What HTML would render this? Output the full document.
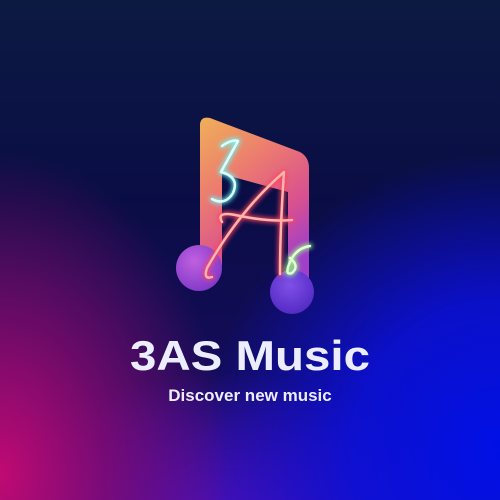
<!DOCTYPE html>
<html><head><meta charset="utf-8"><style>
html,body{margin:0;padding:0}
body{width:500px;height:500px;overflow:hidden;position:relative;font-family:"Liberation Sans",sans-serif;
background:
radial-gradient(ellipse 270px 380px at 0% 95%, #c00a72 0%, rgba(140,10,110,0.75) 40%, rgba(80,10,100,0) 85%),
radial-gradient(ellipse 330px 330px at 100% 90%, #0010e6 0%, rgba(10,16,220,0.85) 45%, rgba(20,16,160,0) 90%),
radial-gradient(ellipse 280px 180px at 45% 105%, #4a10b8 0%, rgba(60,16,170,0) 85%),
linear-gradient(180deg,#0c1a42 0%,#0a0d45 40%,#140c5a 75%,#2a0c90 100%);}
.t{position:absolute;left:0;width:500px;text-align:center;color:#eceeff;font-weight:bold}
</style></head><body>
<svg width="500" height="500" style="position:absolute;left:0;top:0">
<defs>
<linearGradient id="g" x1="0" y1="0" x2="0.5" y2="1">
<stop offset="0" stop-color="#f0b058"/><stop offset="0.4" stop-color="#ec7a70"/><stop offset="0.75" stop-color="#d85090"/><stop offset="1" stop-color="#a040c8"/>
</linearGradient>
<radialGradient id="b" cx="0.4" cy="0.35" r="0.7">
<stop offset="0" stop-color="#c060e0"/><stop offset="1" stop-color="#8038c8"/>
</radialGradient>
<radialGradient id="b2" cx="0.45" cy="0.35" r="0.7">
<stop offset="0" stop-color="#8050e8"/><stop offset="1" stop-color="#5028c0"/>
</radialGradient>
<filter id="gl" x="-50%" y="-50%" width="200%" height="200%"><feGaussianBlur stdDeviation="2.5"/></filter>
</defs>
<path d="M200 124 Q201 116 210 118 L300 152 Q309 157 309 168 L309 290 L288 290 L288 192 L222 174 L222 265 L200 265 Z" fill="url(#g)"/>
<circle cx="199" cy="268" r="23" fill="url(#b)"/>
<circle cx="292" cy="292" r="22" fill="url(#b2)"/>
<g fill="none" stroke-linecap="round" stroke-linejoin="round">
<g filter="url(#gl)" stroke-width="5" opacity="0.9">
<path d="M222 146 Q232 139 238 141 L221 172 Q240 177 233 193 Q225 206 212 199" stroke="#60ffff"/>
<path d="M212 277 Q203 280 207 268 Q240 210 284 172 Q280 230 280 274 M222 222 Q215 210 240 216 Q270 222 292 220" stroke="#ff4060"/>
<path d="M310 246 Q296 248 290 262 Q284 276 292 273 Q300 266 290 258" stroke="#90ff80"/>
</g>
<g stroke-width="2.5">
<path d="M222 146 Q232 139 238 141 L221 172 Q240 177 233 193 Q225 206 212 199" stroke="#e0ffff"/>
<path d="M212 277 Q203 280 207 268 Q240 210 284 172 Q280 230 280 274 M222 222 Q215 210 240 216 Q270 222 292 220" stroke="#ffb4a8"/>
<path d="M310 246 Q296 248 290 262 Q284 276 292 273 Q300 266 290 258" stroke="#e0ffd0"/>
</g>
</g>
</svg>
<div class="t" style="top:335px;font-size:42px;line-height:42px;transform:scaleX(1.13)">3AS Music</div>
<div class="t" style="top:387px;font-size:17px;line-height:17px">Discover new music</div>
</body></html>
